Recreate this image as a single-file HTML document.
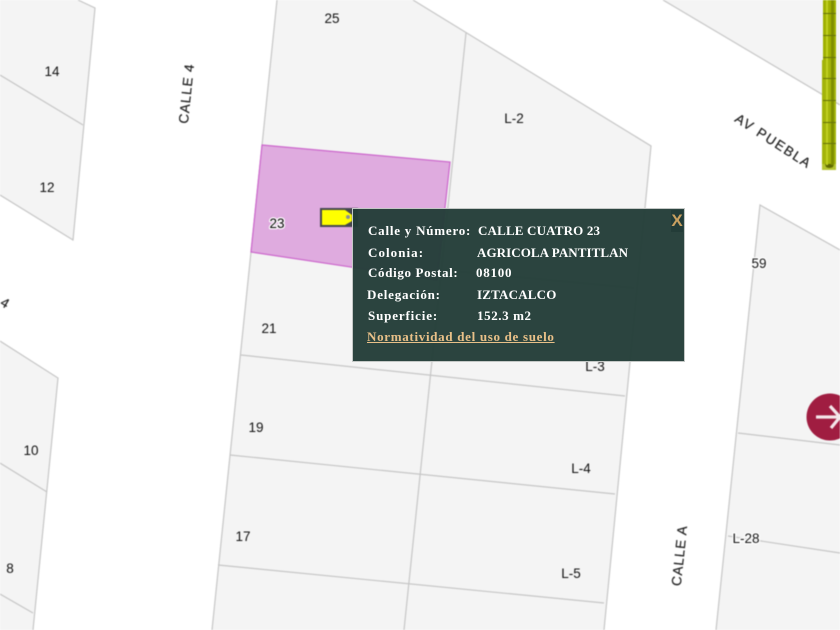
<!DOCTYPE html>
<html lang="es">
<head>
<meta charset="utf-8">
<title>Mapa</title>
<style>
html,body{margin:0;padding:0;background:#fff;}
#wrap{position:relative;width:840px;height:630px;overflow:hidden;background:#fff;}
#map{position:absolute;left:0;top:0;filter:blur(.5px);}
#map text{font-family:"Liberation Sans",sans-serif;font-size:13.5px;fill:#111;text-anchor:middle;}
#map text.h{paint-order:stroke;stroke:#fff;stroke-width:2.5px;stroke-linejoin:round;}
#map text.st{font-size:13.5px;fill:#222;letter-spacing:.9px;stroke:#222;stroke-width:.2px;}
#popup{position:absolute;left:352px;top:208px;width:331px;height:152px;background:rgba(34,60,55,.96);border:1px solid #c4c8c6;filter:blur(.35px);font-family:"Liberation Serif",serif;font-weight:bold;font-size:13px;color:#fff;}
#popup div{position:absolute;white-space:nowrap;line-height:14px;}
#popup a{color:#e8c088;text-decoration:underline;}
#popup #x{left:318px;top:1px;width:12px;height:22px;background:#233c38;color:#c9a060;font-family:"Liberation Sans",sans-serif;font-size:17px;font-weight:bold;line-height:22px;text-align:center;overflow:hidden;}
</style>
</head>
<body>
<div id="wrap">
<svg id="map" width="840" height="630" viewBox="0 0 840 630" xmlns="http://www.w3.org/2000/svg">
  <g fill="#f4f4f4" stroke="none">
    <polygon points="0,0 78,0 95,8 73,240 0,195"/>
    <polygon points="0,341 58,378 33,630 0,630"/>
    <polygon points="277,0 413,0 651,146 604,630 212,630"/>
    <polygon points="760,205 840,250 840,630 716,630"/>
    <polygon points="663,0 840,105 840,0"/>
  </g>
  <g fill="none" stroke="#c6c6c6" stroke-width="1.2">
    <polyline points="78,0 95,8 73,240 0,195"/>
    <line x1="0" y1="75" x2="83" y2="125"/>
    <polyline points="0,341 58,378 33,630"/>
    <line x1="0" y1="463" x2="47" y2="492"/>
    <line x1="0" y1="594" x2="33" y2="613"/>
    <line x1="277" y1="0" x2="212" y2="630"/>
    <polyline points="413,0 651,146 604,630"/>
    <line x1="466" y1="33" x2="404" y2="630"/>
    <line x1="251" y1="252" x2="634" y2="288"/>
    <line x1="241" y1="355" x2="625" y2="396"/>
    <line x1="230" y1="455" x2="615" y2="494"/>
    <line x1="218" y1="565" x2="604" y2="603"/>
    <polyline points="840,250 760,205 716,630"/>
    <line x1="738" y1="433" x2="840" y2="445"/>
    <line x1="728" y1="536" x2="840" y2="553"/>
    <line x1="663" y1="0" x2="840" y2="105"/>
  </g>
  <polygon points="262,145 450,162 437,280 251,252" fill="#dfabdf" stroke="#cc66cc" stroke-width="1.2"/>
  <text x="332" y="23">25</text>
  <text x="52" y="76">14</text>
  <text x="47" y="192">12</text>
  <text class="h" x="277" y="228" style="fill:#000">23</text>
  <text x="514" y="123">L-2</text>
  <text class="h" x="759" y="268">59</text>
  <text x="269" y="333">21</text>
  <text x="595" y="371">L-3</text>
  <text x="256" y="432">19</text>
  <text x="31" y="455">10</text>
  <text x="581" y="473">L-4</text>
  <text x="243" y="541">17</text>
  <text x="10" y="573">8</text>
  <text x="571" y="578">L-5</text>
  <text class="h" x="746" y="543">L-28</text>
  <text class="st" transform="translate(191,94) rotate(-84)">CALLE 4</text>
  <text class="st" transform="translate(684,556) rotate(-84)">CALLE A</text>
  <text class="st" transform="translate(771,145) rotate(33)" style="letter-spacing:1.6px">AV PUEBLA</text>
  <text class="st" transform="translate(3,307) rotate(31)">4</text>
  <!-- marker -->
  <rect x="320" y="208" width="38" height="19" fill="#45474f"/>
  <polygon points="322,210 345,210 352,215 352,221 345,225 322,225" fill="#ffff00"/>
  <circle cx="348" cy="217" r="2" fill="#8a8f98"/>
  <!-- slider -->
  <rect x="823" y="0" width="13" height="166" fill="#9fb000"/>
  <rect x="822" y="60" width="14" height="106" fill="#a3b40a"/>
  <rect x="822" y="164" width="14" height="6" fill="#b4c430"/>
  <path d="M825 164h9l-1 3q-3.500 2-7 0z" fill="#5f6a00"/>
  <rect x="826" y="0" width="2" height="165" fill="#c0d020"/>
  <rect x="831" y="0" width="3" height="165" fill="#7f8e00"/>
  <g stroke="#66720a" stroke-width="1">
    <line x1="823" y1="13.500" x2="836" y2="13.500"/>
    <line x1="823" y1="35.500" x2="836" y2="35.500"/>
    <line x1="823" y1="57.500" x2="836" y2="57.500"/>
    <line x1="823" y1="78.500" x2="836" y2="78.500"/>
    <line x1="823" y1="100.500" x2="836" y2="100.500"/>
    <line x1="823" y1="122.500" x2="836" y2="122.500"/>
    <line x1="823" y1="143.500" x2="836" y2="143.500"/>
  </g>
  <!-- arrow button -->
  <circle cx="830" cy="417" r="23.500" fill="#a01d41"/>
  <path d="M816 417H838M830 406L840 417L831 428" fill="none" stroke="#f4e6ea" stroke-width="3.200"/>
</svg>
<div id="popup">
  <div style="left:15px;top:15px;letter-spacing:.78px">Calle y Número:</div><div style="left:125px;top:15px;letter-spacing:.17px">CALLE CUATRO 23</div>
  <div style="left:15px;top:37px;letter-spacing:1.05px">Colonia:</div><div style="left:124px;top:37px;letter-spacing:.08px">AGRICOLA PANTITLAN</div>
  <div style="left:15px;top:57px;letter-spacing:.65px">Código Postal:</div><div style="left:123px;top:57px;letter-spacing:.75px">08100</div>
  <div style="left:14px;top:79px;letter-spacing:.8px">Delegación:</div><div style="left:124px;top:79px;letter-spacing:.2px">IZTACALCO</div>
  <div style="left:15px;top:100px;letter-spacing:.85px">Superficie:</div><div style="left:124px;top:100px;letter-spacing:.6px">152.3 m2</div>
  <div style="left:14px;top:121px;letter-spacing:.69px"><a>Normatividad del uso de suelo</a></div>
  <div id="x">X</div>
</div>
</div>
</body>
</html>
